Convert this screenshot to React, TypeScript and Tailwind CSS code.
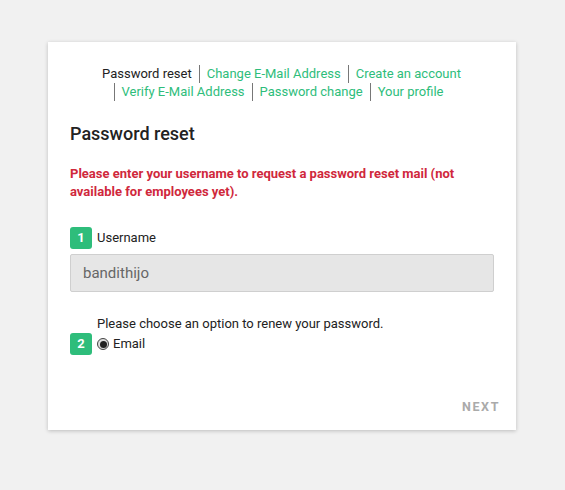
const links = ['Change E-Mail Address', 'Create an account', 'Verify E-Mail Address', 'Password change', 'Your profile']

function Badge({ n }: { n: number }) {
  return (
    <span className="flex h-[22px] w-[22px] shrink-0 items-center justify-center rounded-[3px] bg-[#2ebd7b] text-[13px] font-bold text-white">
      {n}
    </span>
  )
}

export default function App() {
  return (
    <div className="min-h-screen bg-[#f1f1f1] pl-[48px] pt-[42px]" style={{ fontFamily: 'Roboto, "Liberation Sans", sans-serif' }}>
      <div className="w-[468px] bg-white px-[22px] pb-[14px] pt-[23px] shadow-[0_1px_4px_rgba(0,0,0,0.22)]">
        <nav className="text-center text-[13px] leading-[18px]">
          <span className="inline-block pl-[6px] pr-[7px] text-[#222]">Password reset</span>
          {links.map((l) => (
            <span key={l} className="inline-block border-l border-[#777] px-[7px] text-[#2ebd7b]">
              {l}
            </span>
          ))}
        </nav>

        <h1 className="mt-[21px] text-[18px] font-medium leading-[24px] text-[#222]">Password reset</h1>

        <p className="mt-[19px] text-[13px] font-bold leading-[18px] text-[#d0283c]">
          Please enter your username to request a password reset mail (not available for employees yet).
        </p>

        <div className="mt-[26px] flex items-center gap-[5px]">
          <Badge n={1} />
          <span className="text-[13px] text-[#222]">Username</span>
        </div>
        <div className="mt-[5px] flex h-[38px] items-center rounded-[2px] border border-[#cfcfcf] bg-[#e6e6e6] pl-[12px] text-[15px] text-[#666]">
          bandithijo
        </div>

        <p className="mt-[23px] pl-[27px] text-[13px] leading-[18px] text-[#222]">
          Please choose an option to renew your password.
        </p>
        <div className="flex items-center gap-[5px]">
          <Badge n={2} />
          <span className="flex items-center gap-[4px] text-[13px] text-[#222]">
            <span className="flex h-[12px] w-[12px] items-center justify-center rounded-full border border-[#444] bg-[#ddd]">
              <span className="h-[7px] w-[7px] rounded-full bg-[#222]" />
            </span>
            Email
          </span>
        </div>

        <div className="mr-[-6px] mt-[43px] flex justify-end">
          <span className="text-[12.5px] font-bold leading-[18px] tracking-[1.6px] text-[#aaa]">NEXT</span>
        </div>
      </div>
    </div>
  )
}
